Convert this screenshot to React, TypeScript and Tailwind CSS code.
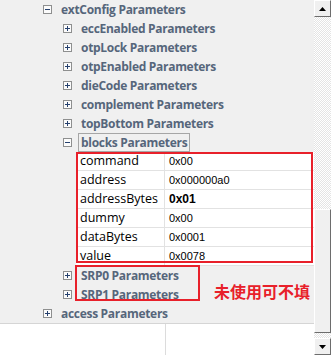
import React from 'react';

type TreeItem = { label: string; level: number; open?: boolean; focused?: boolean };

const topItems: TreeItem[] = [
  { label: 'extConfig Parameters', level: 0, open: true },
  { label: 'eccEnabled Parameters', level: 1 },
  { label: 'otpLock Parameters', level: 1 },
  { label: 'otpEnabled Parameters', level: 1 },
  { label: 'dieCode Parameters', level: 1 },
  { label: 'complement Parameters', level: 1 },
  { label: 'topBottom Parameters', level: 1 },
  { label: 'blocks Parameters', level: 1, open: true, focused: true },
];

const props = [
  { name: 'command', value: '0x00' },
  { name: 'address', value: '0x000000a0' },
  { name: 'addressBytes', value: '0x01', bold: true },
  { name: 'dummy', value: '0x00' },
  { name: 'dataBytes', value: '0x0001' },
  { name: 'value', value: '0x0078' },
];

const bottomItems: TreeItem[] = [
  { label: 'SRP0 Parameters', level: 1 },
  { label: 'SRP1 Parameters', level: 1 },
  { label: 'access Parameters', level: 0 },
];

const ExpandBox = ({ open }: { open?: boolean }) => (
  <svg width="9" height="9" viewBox="0 0 9 9" className="shrink-0">
    <rect x="0.5" y="0.5" width="8" height="8" fill="#fbfbfb" stroke="#8e8f8f" />
    <line x1="2" y1="4.5" x2="7" y2="4.5" stroke="#25406e" />
    {!open && <line x1="4.5" y1="2" x2="4.5" y2="7" stroke="#25406e" />}
  </svg>
);

const TreeRow = ({ item }: { item: TreeItem }) => (
  <div className={item.level === 0 ? 'flex h-[19px] items-center pl-[43px]' : 'flex h-[19px] items-center pl-[63px]'}>
    <ExpandBox open={item.open} />
    <span
      className={
        item.focused
          ? 'ml-[6px] flex h-[19px] items-center border border-[#a6a6a6] px-[2px] text-[12px] font-bold tracking-[-0.3px] text-[#56667b]'
          : 'ml-[9px] text-[12px] font-bold tracking-[-0.3px] text-[#56667b]'
      }
    >
      {item.label}
    </span>
  </div>
);

const ScrollButton = ({ up }: { up?: boolean }) => (
  <div className="flex h-[17px] items-center justify-center border border-t-white border-l-white border-r-[#6d6d6d] border-b-[#6d6d6d] bg-[#f0f0f0]">
    <svg width="7" height="4" viewBox="0 0 7 4">
      {up ? <polygon points="3.5,0 7,4 0,4" fill="#000" /> : <polygon points="0,0 7,0 3.5,4" fill="#000" />}
    </svg>
  </div>
);

export default function App() {
  return (
    <div className="flex h-[355px] w-[331px] overflow-hidden bg-[#f0f0f0] font-['Open_Sans',sans-serif]">
      <div className="relative flex w-[314px] flex-col">
        {topItems.map(item => (
          <TreeRow key={item.label} item={item} />
        ))}
        <div className="ml-[76px] flex flex-col bg-white">
          {props.map(p => (
            <div key={p.name} className="flex h-[19px] border-b border-[#e2e2e2]">
              <div className="flex w-[89px] items-center border-r border-[#e2e2e2] pl-[4px] text-[12.5px] text-black">
                {p.name}
              </div>
              <div
                className={
                  p.bold
                    ? "flex items-center pl-[4px] font-['Liberation_Sans',sans-serif] text-[12px] font-bold text-black"
                    : "flex items-center pl-[4px] font-['Liberation_Sans',sans-serif] text-[11px] text-black"
                }
              >
                {p.value}
              </div>
            </div>
          ))}
        </div>
        {bottomItems.map(item => (
          <TreeRow key={item.label} item={item} />
        ))}
        <div className="flex flex-1 border-t border-[#d5d5d5] bg-white">
          <div className="w-[166px] border-r border-[#dcdcdc]" />
        </div>

        <div className="absolute left-[76px] top-[152px] h-[111px] w-[237px] border-2 border-[#e8202a]" />
        <div className="absolute left-[75px] top-[265px] h-[36px] w-[125px] border-2 border-[#e8202a]" />
        <div className="absolute left-[214px] top-[279px] font-['Noto_Sans_CJK_SC',sans-serif] text-[16px] font-bold text-[#e8202a]">
          未使用可不填
        </div>
      </div>
      <div className="flex w-[17px] flex-col bg-[repeating-conic-gradient(#e4e4e4_0_25%,#ffffff_0_50%)] bg-size-[2px_2px]">
        <ScrollButton up />
        <div className="h-[192px]" />
        <div className="h-[124px] border border-t-white border-l-white border-r-[#6d6d6d] border-b-[#6d6d6d] bg-[#f0f0f0]" />
        <div className="flex-1" />
        <ScrollButton />
      </div>
    </div>
  );
}
